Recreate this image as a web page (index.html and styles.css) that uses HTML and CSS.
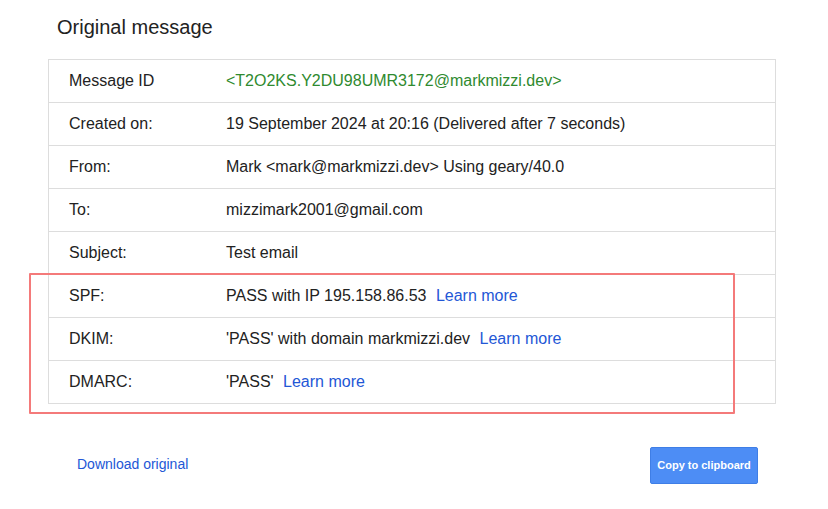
FILE: index.html
```html
<!DOCTYPE html>
<html>
<head>
<meta charset="utf-8">
<link rel="stylesheet" href="styles.css">
</head>
<body>
<div class="page">
  <h1 class="title">Original message</h1>
  <div class="table">
    <div class="row"><div class="label">Message ID</div><div class="value msgid">&lt;T2O2KS.Y2DU98UMR3172@markmizzi.dev&gt;</div></div>
    <div class="row"><div class="label">Created on:</div><div class="value">19 September 2024 at 20:16 (Delivered after 7 seconds)</div></div>
    <div class="row"><div class="label">From:</div><div class="value">Mark &lt;mark@markmizzi.dev&gt; Using geary/40.0</div></div>
    <div class="row"><div class="label">To:</div><div class="value">mizzimark2001@gmail.com</div></div>
    <div class="row"><div class="label">Subject:</div><div class="value">Test email</div></div>
    <div class="row"><div class="label">SPF:</div><div class="value">PASS with IP 195.158.86.53 <a class="link">Learn more</a></div></div>
    <div class="row"><div class="label">DKIM:</div><div class="value">'PASS' with domain markmizzi.dev <a class="link">Learn more</a></div></div>
    <div class="row"><div class="label">DMARC:</div><div class="value">'PASS' <a class="link">Learn more</a></div></div>
  </div>
  <div class="footer">
    <a class="download">Download original</a>
    <button class="copy">Copy to clipboard</button>
  </div>
  <div class="highlight"></div>
</div>
</body>
</html>
```
FILE: styles.css
```css
* { box-sizing: border-box; }
html, body { margin: 0; padding: 0; background: #fff; }
body { font-family: "Liberation Sans", Arial, sans-serif; color: #222; }
.page { position: relative; padding-left: 48px; width: 828px; height: 509px; }
.title { margin: 0 0 20px 9px; padding-top: 16px; font-size: 20px; font-weight: normal; line-height: 23px; color: #222; }
.table { width: 728px; border: 1px solid #ddd; }
.row { display: flex; align-items: center; height: 43px; border-top: 1px solid #ddd; padding-left: 20px; font-size: 16px; }
.row:first-child { border-top: none; height: 42px; }
.label { width: 157px; flex: none; color: #222; }
.value { color: #222; white-space: nowrap; }
.msgid { color: #2f8a2f; }
.link { color: #2357d6; margin-left: 5px; cursor: pointer; }
.footer { display: flex; justify-content: space-between; align-items: center; margin-top: 43px; width: 728px; padding-left: 29px; padding-right: 18px; height: 37px; }
.download { color: #2357d6; font-size: 14px; cursor: pointer; margin-top: -3px; }
.copy { width: 108px; height: 37px; background: #4d8df5; border: 1px solid #3f7ee6; border-radius: 2px; color: #fff; font-family: "Liberation Sans", Arial, sans-serif; font-weight: bold; font-size: 11px; padding: 0 0 2px 0; }
.highlight { position: absolute; left: 29px; top: 273px; width: 706px; height: 141px; border: 2px solid #f47a7a; border-radius: 1px; pointer-events: none; }
```
